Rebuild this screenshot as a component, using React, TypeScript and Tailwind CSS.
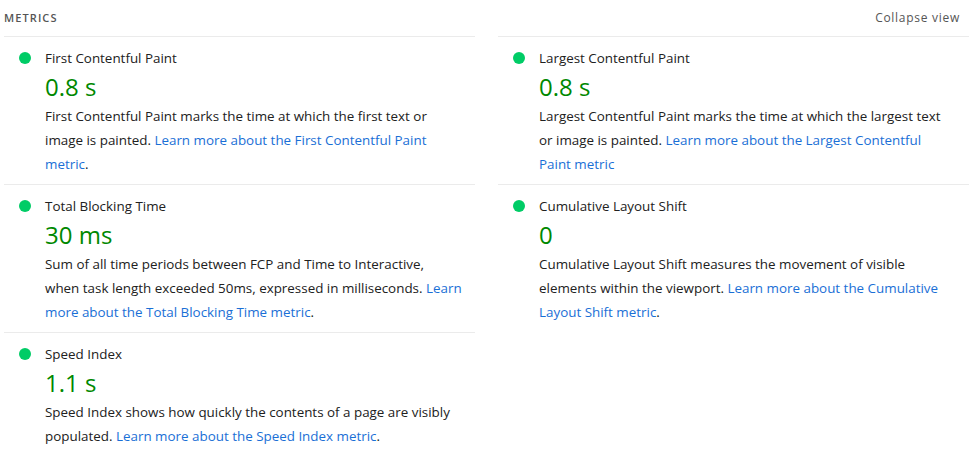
const metrics = [
  [
    {
      title: 'First Contentful Paint',
      value: '0.8 s',
      lines: [
        ['First Contentful Paint marks the time at which the first text or', ''],
        ['image is painted. ', 'Learn more about the First Contentful Paint'],
        ['', 'metric', '.'],
      ],
    },
    {
      title: 'Total Blocking Time',
      value: '30 ms',
      lines: [
        ['Sum of all time periods between FCP and Time to Interactive,', ''],
        ['when task length exceeded 50ms, expressed in milliseconds. ', 'Learn'],
        ['', 'more about the Total Blocking Time metric', '.'],
      ],
    },
    {
      title: 'Speed Index',
      value: '1.1 s',
      lines: [
        ['Speed Index shows how quickly the contents of a page are visibly', ''],
        ['populated. ', 'Learn more about the Speed Index metric', '.'],
      ],
    },
  ],
  [
    {
      title: 'Largest Contentful Paint',
      value: '0.8 s',
      lines: [
        ['Largest Contentful Paint marks the time at which the largest text', ''],
        ['or image is painted. ', 'Learn more about the Largest Contentful'],
        ['', 'Paint metric'],
      ],
    },
    {
      title: 'Cumulative Layout Shift',
      value: '0',
      lines: [
        ['Cumulative Layout Shift measures the movement of visible', ''],
        ['elements within the viewport. ', 'Learn more about the Cumulative'],
        ['', 'Layout Shift metric', '.'],
      ],
    },
  ],
];

type Metric = { title: string; value: string; lines: string[][] };

function MetricRow({ m }: { m: Metric }) {
  return (
    <div className="flex border-t border-[#ebebeb] pt-[11px] h-[148px]">
      <div className="w-[41px] shrink-0 flex justify-center pt-[4px]">
        <span className="block w-[12px] h-[12px] rounded-full bg-[#0c6]" />
      </div>
      <div className="flex flex-col min-w-0">
        <div className="text-[13.4px] leading-[20px] text-[#212121]">{m.title}</div>
        <div className="text-[24px] leading-[34px] text-[#080] mt-[2px]">{m.value}</div>
        <div className="text-[13.4px] leading-[24px] text-[#212121] whitespace-nowrap">
          {m.lines.map((l, i) => (
            <div key={i}>
              {l[0]}
              {l[1] && <a className="text-[#1a6fd6]">{l[1]}</a>}
              {l[2]}
            </div>
          ))}
        </div>
      </div>
    </div>
  );
}

export default function App() {
  return (
    <div className="w-[975px] h-[472px] bg-white overflow-hidden font-['Open_Sans','Noto_Sans',sans-serif]">
      <div className="flex justify-between items-center h-[36px] px-[4px] pr-[15px]">
        <span className="text-[11px] font-semibold tracking-[0.1em] text-[#555]">METRICS</span>
        <span className="text-[12px] tracking-[0.06em] text-[#555]">Collapse view</span>
      </div>
      <div className="flex gap-[23px] pl-[4px]">
        {metrics.map((col, ci) => (
          <div key={ci} className="w-[471px]">
            {col.map((m) => (
              <MetricRow key={m.title} m={m} />
            ))}
          </div>
        ))}
      </div>
    </div>
  );
}
